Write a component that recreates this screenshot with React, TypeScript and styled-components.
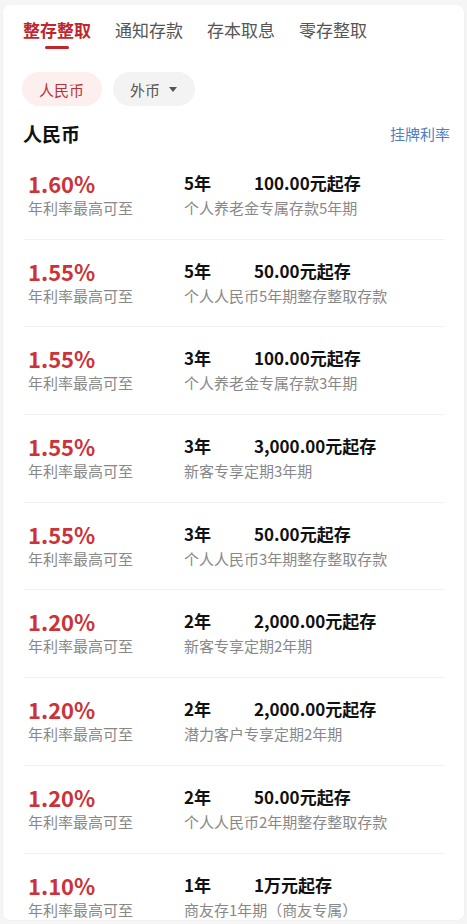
import React from 'react';
import styled, { createGlobalStyle } from 'styled-components';

const GlobalStyle = createGlobalStyle`
	html, body {
		margin: 0;
		padding: 0;
		background: #f5f5f5;
	}
	body {
		font-family: 'Noto Sans CJK SC', 'Noto Sans', sans-serif;
		-webkit-font-smoothing: antialiased;
	}
`;

type Product = {
	rate: string;
	term: string;
	amount: string;
	name: string;
};

const products: Product[] = [
	{ rate: '1.60', term: '5年', amount: '100.00元起存', name: '个人养老金专属存款5年期' },
	{ rate: '1.55', term: '5年', amount: '50.00元起存', name: '个人人民币5年期整存整取存款' },
	{ rate: '1.55', term: '3年', amount: '100.00元起存', name: '个人养老金专属存款3年期' },
	{ rate: '1.55', term: '3年', amount: '3,000.00元起存', name: '新客专享定期3年期' },
	{ rate: '1.55', term: '3年', amount: '50.00元起存', name: '个人人民币3年期整存整取存款' },
	{ rate: '1.20', term: '2年', amount: '2,000.00元起存', name: '新客专享定期2年期' },
	{ rate: '1.20', term: '2年', amount: '2,000.00元起存', name: '潜力客户专享定期2年期' },
	{ rate: '1.20', term: '2年', amount: '50.00元起存', name: '个人人民币2年期整存整取存款' },
	{ rate: '1.10', term: '1年', amount: '1万元起存', name: '商友存1年期（商友专属）' },
];

const tabs = ['整存整取', '通知存款', '存本取息', '零存整取'];

const Page = styled.div`
	padding: 5px 2px 3px;
`;

const Card = styled.div`
	background: #fff;
	border-radius: 8px;
	border: 1px solid #f0f0f0;
	border-top: none;
	height: 916px;
	overflow: hidden;
	box-sizing: border-box;
`;

const TabBar = styled.div`
	display: flex;
	gap: 24px;
	padding: 13px 0 0 20px;
`;

const Tab = styled.div<{ $active?: boolean }>`
	display: flex;
	flex-direction: column;
	align-items: center;
	gap: 4px;
	font-size: 17px;
	line-height: 24px;
	font-weight: ${p => (p.$active ? 700 : 400)};
	color: ${p => (p.$active ? '#c0272d' : '#555')};

	&::after {
		content: '';
		width: 24px;
		height: 3px;
		border-radius: 2px;
		background: ${p => (p.$active ? '#c0272d' : 'transparent')};
	}
`;

const ChipRow = styled.div`
	display: flex;
	gap: 11px;
	padding: 23px 0 0 19px;
`;

const Chip = styled.div<{ $active?: boolean }>`
	display: flex;
	align-items: center;
	gap: 9px;
	height: 34px;
	padding: 0 18px 0 17px;
	border-radius: 17px;
	font-size: 15px;
	background: ${p => (p.$active ? '#fdefee' : '#f3f3f3')};
	color: ${p => (p.$active ? '#b8333a' : '#555')};
`;

const Caret = styled.span`
	width: 0;
	height: 0;
	border-left: 4px solid transparent;
	border-right: 4px solid transparent;
	border-top: 5px solid #555;
`;

const SectionHead = styled.div`
	display: flex;
	justify-content: space-between;
	align-items: center;
	padding: 14px 14px 0 20px;
	height: 26px;
`;

const SectionTitle = styled.div`
	font-size: 19px;
	font-weight: 700;
	color: #111;
`;

const BoardLink = styled.div`
	font-size: 15px;
	color: #4f7fbf;
`;

const List = styled.div`
	padding: 6px 19px 0 21px;
`;

const Row = styled.div`
	display: grid;
	grid-template-columns: 156px 70px 1fr;
	grid-template-rows: 22px 20px;
	row-gap: 4px;
	padding: 20px 0 20.7px 4px;
	border-bottom: 1px solid #f1f1f1;

	&:last-child {
		border-bottom: none;
	}
`;

const Rate = styled.div`
	font-size: 22px;
	line-height: 22px;
	font-weight: 700;
	color: #cc3238;
`;

const RateNote = styled.div`
	grid-column: 1;
	font-size: 15px;
	line-height: 20px;
	color: #888;
`;

const Strong = styled.div`
	font-size: 17px;
	line-height: 22px;
	font-weight: 700;
	color: #111;
`;

const Name = styled.div`
	grid-column: 2 / 4;
	font-size: 15px;
	line-height: 20px;
	color: #888;
	white-space: nowrap;
`;

export default function App() {
	return (
		<>
			<GlobalStyle />
			<Page>
				<Card>
					<TabBar>
						{tabs.map((t, i) => (
							<Tab key={t} $active={i === 0}>
								{t}
							</Tab>
						))}
					</TabBar>
					<ChipRow>
						<Chip $active>人民币</Chip>
						<Chip>
							外币
							<Caret />
						</Chip>
					</ChipRow>
					<SectionHead>
						<SectionTitle>人民币</SectionTitle>
						<BoardLink>挂牌利率</BoardLink>
					</SectionHead>
					<List>
						{products.map((p, i) => (
							<Row key={i}>
								<Rate>{p.rate}%</Rate>
								<Strong>{p.term}</Strong>
								<Strong>{p.amount}</Strong>
								<RateNote>年利率最高可至</RateNote>
								<Name>{p.name}</Name>
							</Row>
						))}
					</List>
				</Card>
			</Page>
		</>
	);
}
